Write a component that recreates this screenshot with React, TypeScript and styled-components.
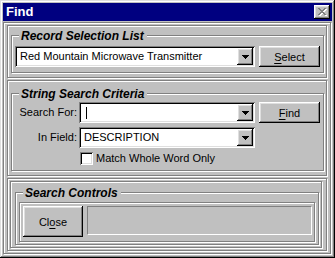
import React from 'react';
import styled, { createGlobalStyle } from 'styled-components';

const GlobalStyle = createGlobalStyle`
  html, body {
    margin: 0;
    padding: 0;
    background: #c0c0c0;
  }
  body {
    font-family: "Liberation Sans", Arial, sans-serif;
    font-size: 11px;
    color: #000;
  }
  * {
    box-sizing: border-box;
  }
`;

const raised = `
  box-shadow: inset -1px -1px #000, inset 1px 1px #fff,
    inset -2px -2px #808080, inset 2px 2px #dfdfdf;
`;

const sunken = `
  box-shadow: inset 1px 1px #808080, inset -1px -1px #fff,
    inset 2px 2px #000, inset -2px -2px #dfdfdf;
`;

const etched = `
  border: 1px solid #808080;
  box-shadow: inset 1px 1px #fff, 1px 1px #fff;
`;

const Window = styled.div`
  width: 335px;
  height: 258px;
  padding: 3px;
  display: flex;
  flex-direction: column;
  background: #c0c0c0;
  box-shadow: inset -1px -1px #000, inset 1px 1px #dfdfdf,
    inset -2px -2px #808080, inset 2px 2px #fff;
`;

const TitleBar = styled.div`
  height: 18px;
  flex: none;
  display: flex;
  align-items: center;
  justify-content: space-between;
  padding: 0 2px 0 3px;
  background: #000080;
  color: #fff;
  font: bold 13px/18px "Liberation Sans", Arial, sans-serif;
`;

const CloseBox = styled.div`
  width: 16px;
  height: 14px;
  background: #c0c0c0;
  ${raised}
  display: flex;
  align-items: center;
  justify-content: center;
`;

const Body = styled.div`
  flex: 1;
  margin: 1px 1px 1px 0;
  ${etched}
  padding: 2px 3px;
  display: flex;
  flex-direction: column;
  gap: 2px;
`;

const Section = styled.div<{ $pad: string; $grow?: boolean }>`
  ${etched}
  padding: ${p => p.$pad};
  flex: ${p => (p.$grow ? 1 : 'none')};
`;

const Frame = styled.div`
  ${etched}
  padding: 10px 2px 2px 4px;
`;

const Group = styled.div<{ $pad: string }>`
  position: relative;
  ${etched}
  padding: ${p => p.$pad};
`;

const GroupLabel = styled.span`
  position: absolute;
  top: -6px;
  left: 7px;
  padding: 0 3px 0 2px;
  background: #c0c0c0;
  font: italic bold 12px/13px "Liberation Sans", Arial, sans-serif;
  white-space: nowrap;
`;

const Row = styled.div<{ $top?: number }>`
  display: flex;
  align-items: flex-start;
  gap: 4px;
  margin-top: ${p => p.$top ?? 0}px;
`;

const FieldLabel = styled.div`
  width: 62px;
  margin-right: -2px;
  text-align: right;
  line-height: 21px;
  white-space: nowrap;
`;

const Combo = styled.div<{ $w: number }>`
  width: ${p => p.$w}px;
  height: 21px;
  padding: 2px;
  background: #fff;
  ${sunken}
  display: flex;
  align-items: center;
`;

const ComboText = styled.div`
  flex: 1;
  padding-left: 3px;
  line-height: 17px;
  white-space: nowrap;
  overflow: hidden;
`;

const Caret = styled.span`
  display: block;
  width: 1px;
  height: 12px;
  margin-left: 2px;
  background: #000;
`;

const DropButton = styled.div`
  width: 16px;
  height: 17px;
  flex: none;
  background: #c0c0c0;
  ${raised}
  display: flex;
  align-items: center;
  justify-content: center;
`;

const Button = styled.div<{ $w: number; $h: number }>`
  width: ${p => p.$w}px;
  height: ${p => p.$h}px;
  flex: none;
  background: #c0c0c0;
  ${raised}
  display: flex;
  align-items: center;
  justify-content: center;
  white-space: nowrap;

  u {
    text-underline-offset: 2px;
  }
`;

const CheckRow = styled.div`
  display: flex;
  align-items: center;
  gap: 3px;
  height: 13px;
  margin-top: 4px;
  padding-left: 65px;
  line-height: 13px;
`;

const CheckBox = styled.div`
  width: 13px;
  height: 13px;
  background: #fff;
  ${sunken}
`;

const Inner = styled.div`
  ${etched}
  padding: 3px 2px 4px 3px;
  display: flex;
  align-items: flex-start;
  gap: 4px;
`;

const StatusPanel = styled.div`
  width: 225px;
  height: 29px;
  border-style: solid;
  border-width: 1px;
  border-color: #808080 #fff #fff #808080;
`;

const xCells = [
  [0, 0], [1, 0], [6, 0], [7, 0],
  [1, 1], [2, 1], [5, 1], [6, 1],
  [2, 2], [3, 2], [4, 2], [5, 2],
  [3, 3], [4, 3],
  [2, 4], [3, 4], [4, 4], [5, 4],
  [1, 5], [2, 5], [5, 5], [6, 5],
  [0, 6], [1, 6], [6, 6], [7, 6],
];

const DisabledX = () => (
  <svg width="9" height="8" viewBox="0 0 9 8" shapeRendering="crispEdges">
    {xCells.map(([x, y]) => (
      <rect key={`s${x}-${y}`} x={x + 1} y={y + 1} width="1" height="1" fill="#fff" />
    ))}
    {xCells.map(([x, y]) => (
      <rect key={`g${x}-${y}`} x={x} y={y} width="1" height="1" fill="#808080" />
    ))}
  </svg>
);

const DownArrow = () => (
  <svg width="7" height="4" viewBox="0 0 7 4" shapeRendering="crispEdges">
    <rect x="0" y="0" width="7" height="1" fill="#000" />
    <rect x="1" y="1" width="5" height="1" fill="#000" />
    <rect x="2" y="2" width="3" height="1" fill="#000" />
    <rect x="3" y="3" width="1" height="1" fill="#000" />
  </svg>
);

const ComboBox: React.FC<{ width: number; value?: string; focused?: boolean }> = ({
  width,
  value,
  focused,
}) => (
  <Combo $w={width}>
    <ComboText>{focused ? <Caret /> : value}</ComboText>
    <DropButton>
      <DownArrow />
    </DropButton>
  </Combo>
);

export default function App() {
  return (
    <>
      <GlobalStyle />
      <Window>
        <TitleBar>
          <span>Find</span>
          <CloseBox>
            <DisabledX />
          </CloseBox>
        </TitleBar>
        <Body>
          <Section $pad="9px 2px 4px 3px">
            <Group $pad="10px 3px 5px 3px">
              <GroupLabel>Record Selection List</GroupLabel>
              <Row>
                <ComboBox width={240} value="Red Mountain Microwave Transmitter" />
                <Button $w={61} $h={21}>
                  <span>
                    <u>S</u>elect
                  </span>
                </Button>
              </Row>
            </Group>
          </Section>

          <Section $pad="12px 2px 4px 3px">
            <Group $pad="8px 3px 5px 3px">
              <GroupLabel>String Search Criteria</GroupLabel>
              <Row>
                <FieldLabel>Search For:</FieldLabel>
                <ComboBox width={176} focused />
                <Button $w={61} $h={21}>
                  <span>
                    <u>F</u>ind
                  </span>
                </Button>
              </Row>
              <Row $top={4}>
                <FieldLabel>In Field:</FieldLabel>
                <ComboBox width={176} value="DESCRIPTION" />
              </Row>
              <CheckRow>
                <CheckBox />
                <span>Match Whole Word Only</span>
              </CheckRow>
            </Group>
          </Section>

          <Section $pad="2px 4px 2px 2px" $grow>
            <Frame>
              <Group $pad="9px 3px 2px 3px">
                <GroupLabel>Search Controls</GroupLabel>
                <Inner>
                  <Button $w={60} $h={31}>
                    <span>
                      Cl<u>o</u>se
                    </span>
                  </Button>
                  <StatusPanel />
                </Inner>
              </Group>
            </Frame>
          </Section>
        </Body>
      </Window>
    </>
  );
}
